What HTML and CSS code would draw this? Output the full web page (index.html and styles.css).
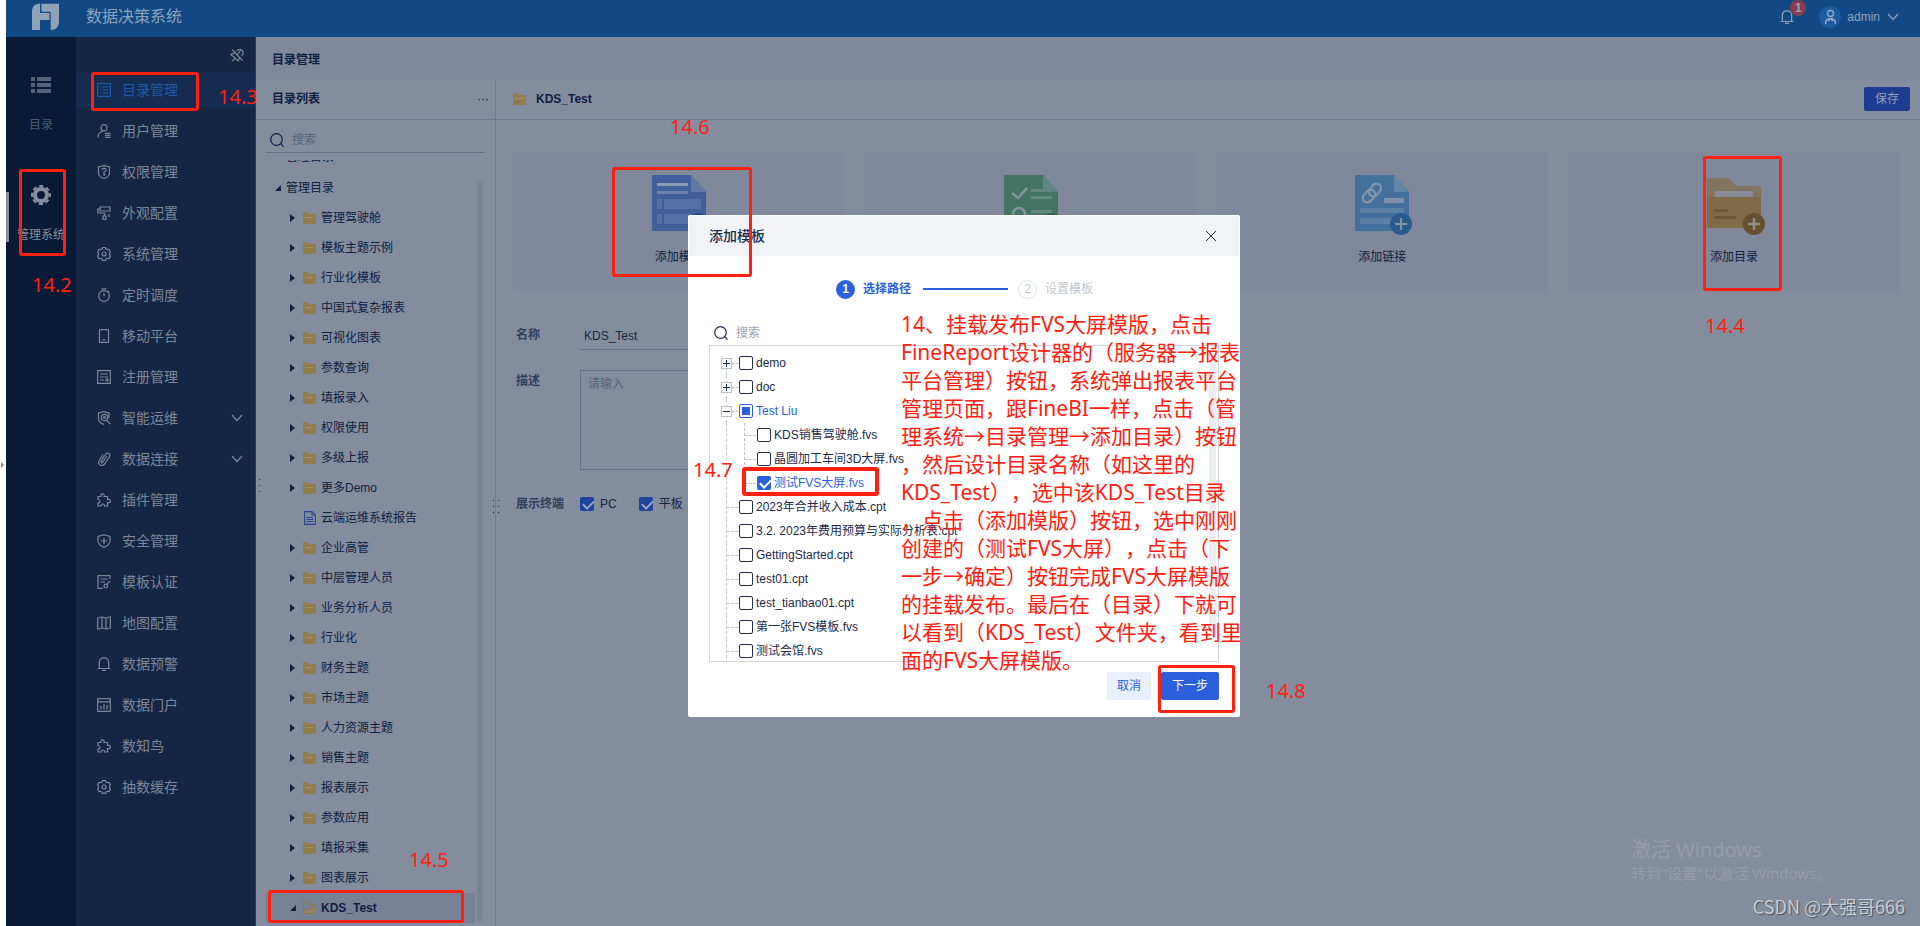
FILE: index.html
```html
<!DOCTYPE html>
<html lang="zh-CN">
<head>
<meta charset="utf-8">
<title>数据决策系统</title>
<link rel="stylesheet" href="styles.css">
</head>
<body>
<svg class="defs" aria-hidden="true">
  <symbol id="folder" viewBox="0 0 13 12"><path d="M0 0H5L6 2H13V12H0Z" fill="#937c4e"/><path d="M2 5.500H11" stroke="#a59169" stroke-width="1"/><path d="M2 9.500H6" stroke="#86703f" stroke-width="1"/></symbol>
  <symbol id="folder-open" viewBox="0 0 13 12"><path d="M.5 11V.5H4.500L6 2.500H11.500V6" fill="none" stroke="#8f7845"/><path d="M.5 11.500V7.500H6L7 6.500H12.500V11.500Z" fill="#938463" stroke="#8f7845"/></symbol>
  <symbol id="report" viewBox="0 0 12 14"><path d="M.6 .6H8L11.400 4V13.400H.6ZM8 .6V4H11.400M2.500 6.500H9M2.500 8.500H9.500M2.500 10.500H9.500" fill="none" stroke="#2b4594" stroke-width="1.100"/></symbol>
  <symbol id="search" viewBox="0 0 14 14"><circle cx="6.500" cy="6.500" r="5.800"/><path d="M10.700 10.700L13.600 13.600"/></symbol>
  <symbol id="chevron" viewBox="0 0 12 8"><path d="M1 1L6 6.500L11 1"/></symbol>
  <symbol id="gear" viewBox="0 0 14 14"><path d="M5 2L5.500 .7H8.500L9 2L10.300 2.700L12 2.500L13.400 5L12.500 6.200V7.800L13.400 9L12 11.500L10.300 11.300L9 12L8.500 13.300H5.500L5 12L3.700 11.300L2 11.500L.6 9L1.500 7.800V6.200L.6 5L2 2.500L3.700 2.700Z"/><circle cx="7" cy="7" r="2"/></symbol>
  <symbol id="puzzle" viewBox="0 0 14 14"><path d="M1 3.500H4Q3.300 .8 5.500 .8Q7.700 .8 7 3.500H10.500V6.500Q13.400 5.800 13.400 8Q13.400 10.200 10.500 9.500V13H7.500Q7.500 11 5.800 11Q4 11 4 13H1V10Q3 9.800 3 8.200Q3 6.600 1 6.500Z"/></symbol>
  <symbol id="bell" viewBox="0 0 14 14"><path d="M2.300 11.500V6Q2.300 .8 7 .8Q11.700 .8 11.700 6V11.500M.5 11.500H13.500M5 13.400H9"/></symbol>
</svg>

<div class="app">
  <header class="topbar">
    <svg class="logo" viewBox="0 0 28 28"><path d="M0 27V7Q1 1 7 .7H8V10H17.500V17H8V27ZM9.300 .7H27V20Q26 26 20 27H18.700V8.700H9.300Z" fill="#8fa2b8"/></svg>
    <h1>数据决策系统</h1>
    <button class="notice" aria-label="消息"><svg class="line" width="14" height="14"><use href="#bell"/></svg><span class="count">1</span></button>
    <button class="user"><svg class="avatar" viewBox="0 0 22 22"><circle cx="11" cy="11" r="11" fill="#1d5b9f"/><g fill="none" stroke="#91a6bf" stroke-width="1.400"><circle cx="11.500" cy="7.500" r="3"/><path d="M6.500 18Q6.500 12.500 11.500 12.500Q16.500 12.500 16.500 18M9 15L11.500 12.500L14 15"/></g></svg>admin<svg class="line" width="12" height="8"><use href="#chevron"/></svg></button>
  </header>

  <div class="body">
    <nav class="rail">
      <a href="#dir"><svg width="20" height="20" viewBox="0 0 20 20" fill="#566276"><path d="M0 2H4V6H0ZM6 2H20V6H6ZM0 8H4V12H0ZM6 8H20V12H6ZM0 14H4V18H0ZM6 14H20V18H6Z"/></svg>目录</a>
      <a href="#sys" class="on"><svg width="20" height="20" viewBox="0 0 20 20"><g fill="none" stroke="#868f9e"><circle cx="10" cy="10" r="6" stroke-width="4"/><circle cx="10" cy="10" r="9" stroke-width="2" stroke-dasharray="4.200 2.868" stroke-dashoffset="2.100"/></g></svg>管理系统</a>
    </nav>

    <nav class="menu">
      <button class="pin" aria-label="固定"><svg class="line" width="14" height="14" viewBox="0 0 14 14"><path d="M6.500 3L8.500 1.500H11L13 3.500V6L11.500 8M9.500 9.500L8 13L5.500 10.500L2 13M5.500 10.500L1 6.500L4.500 5M2 1.500L12.500 12.500M11 1.500L7.500 6.500"/></svg></button>
      <ul>
        <li><a href="#1" class="on"><svg class="line" viewBox="0 0 14 14"><path d="M.7 .7H13.300V13.300H.7ZM3 4H4M5.500 4H11.500M3 7H4M5.500 7H11.500M3 10H4M5.500 10H11.500"/></svg>目录管理</a></li>
        <li><a href="#2"><svg class="line" viewBox="0 0 14 14"><circle cx="7" cy="3.800" r="3.100"/><path d="M1 13.500Q1 8 6 7.500M8 9.300H13.500M8 11.300H13.500M8 13.300H13.500"/></svg>用户管理</a></li>
        <li><a href="#3"><svg class="line" viewBox="0 0 14 14"><path d="M7 .6L12.500 2V8.500Q12 12 7 13.500Q2 12 1.500 8.500V2Z"/><path d="M5 5Q5 3.300 7 3.300Q9 3.300 9 5Q9 6.500 7 7V11M7 9.500H8.500"/></svg>权限管理</a></li>
        <li><a href="#4"><svg class="line" viewBox="0 0 14 14"><path d="M3 1H13V5H3ZM3 3H.8V7H7.500V10M6 10H9V13.500H6ZM12 8V11"/></svg>外观配置</a></li>
        <li><a href="#5"><svg class="line" viewBox="0 0 14 14"><use href="#gear"/></svg>系统管理</a></li>
        <li><a href="#6"><svg class="line" viewBox="0 0 14 14"><circle cx="7" cy="8" r="5.400"/><path d="M4.500 .8H9.500M7 5V8.500M11 3L12.300 4.300"/></svg>定时调度</a></li>
        <li><a href="#7"><svg class="line" viewBox="0 0 14 14"><path d="M2.500 .7H11.500V13.300H2.500ZM5.500 10.800H8.500"/></svg>移动平台</a></li>
        <li><a href="#8"><svg class="line" viewBox="0 0 14 14"><path d="M.7 .7H13.300V13.300H.7ZM3 4H11M3 7H11M3 10H7M8 10H12M10 8V12"/></svg>注册管理</a></li>
        <li><a href="#9"><svg class="line" viewBox="0 0 14 14"><path d="M12 7V2L7 .7L1.500 2V8Q2 12 7 13.400"/><circle cx="7.500" cy="6.500" r="3.200"/><circle cx="7.500" cy="6.500" r="1"/><path d="M9.500 9L13.300 13.200"/></svg>智能运维<svg class="line arrow"><use href="#chevron"/></svg></a></li>
        <li><a href="#10"><svg class="line" viewBox="0 0 14 14"><path d="M10 4L5.500 10.500Q4 11.500 4 9.500L8 3Q10 0 12 1.500Q13.500 3 12 5.500L8 11.500Q5.500 14.500 3 13Q.5 11 2.500 8L6 2.500"/></svg>数据连接<svg class="line arrow"><use href="#chevron"/></svg></a></li>
        <li><a href="#11"><svg class="line" viewBox="0 0 14 14"><use href="#puzzle"/></svg>插件管理</a></li>
        <li><a href="#12"><svg class="line" viewBox="0 0 14 14"><path d="M7 .7L13 2.500V7Q12.500 11.500 7 13.400Q1.500 11.500 1 7V2.500ZM7 4V10M4 7H10"/></svg>安全管理</a></li>
        <li><a href="#13"><svg class="line" viewBox="0 0 14 14"><path d="M13 4V.7H1V13.300H6M3.500 4H10.500M3.500 7H8M13 6L9.500 9.500"/><circle cx="8.800" cy="11" r="1.800"/></svg>模板认证</a></li>
        <li><a href="#14"><svg class="line" viewBox="0 0 14 14"><path d="M.7 2L5 1L9 2L13.300 1V12L9 13L5 12L.7 13ZM5 1V12M9 2V13"/></svg>地图配置</a></li>
        <li><a href="#15"><svg class="line" viewBox="0 0 14 14"><use href="#bell"/></svg>数据预警</a></li>
        <li><a href="#16"><svg class="line" viewBox="0 0 14 14"><path d="M.7 .7H13.300V13.300H.7ZM.7 3.800H13.300M4 8V11.500M7 6V11.500M10 7V11.500"/></svg>数据门户</a></li>
        <li><a href="#17"><svg class="line" viewBox="0 0 14 14"><use href="#puzzle"/></svg>数知鸟</a></li>
        <li><a href="#18"><svg class="line" viewBox="0 0 14 14"><use href="#gear"/></svg>抽数缓存</a></li>
      </ul>
    </nav>

    <main class="work">
      <h2 class="crumb">目录管理</h2>
      <div class="split">
        <section class="catalog">
          <header class="bar"><h3>目录列表</h3><button class="more" aria-label="更多">···</button></header>
          <label class="find"><svg class="line" width="14" height="14"><use href="#search"/></svg><input type="search" placeholder="搜索" aria-label="搜索目录"></label>
          <div class="scroll">
            <ul class="tree">
              <li class="root cut"><i class="tri open"></i>管理目录</li>
              <li class="root"><i class="tri open"></i>管理目录</li>
              <li><i class="tri"></i><svg><use href="#folder"/></svg>管理驾驶舱</li>
              <li><i class="tri"></i><svg><use href="#folder"/></svg>模板主题示例</li>
              <li><i class="tri"></i><svg><use href="#folder"/></svg>行业化模板</li>
              <li><i class="tri"></i><svg><use href="#folder"/></svg>中国式复杂报表</li>
              <li><i class="tri"></i><svg><use href="#folder"/></svg>可视化图表</li>
              <li><i class="tri"></i><svg><use href="#folder"/></svg>参数查询</li>
              <li><i class="tri"></i><svg><use href="#folder"/></svg>填报录入</li>
              <li><i class="tri"></i><svg><use href="#folder"/></svg>权限使用</li>
              <li><i class="tri"></i><svg><use href="#folder"/></svg>多级上报</li>
              <li><i class="tri"></i><svg><use href="#folder"/></svg>更多Demo</li>
              <li><i class="tri none"></i><svg class="doc"><use href="#report"/></svg>云端运维系统报告</li>
              <li><i class="tri"></i><svg><use href="#folder"/></svg>企业高管</li>
              <li><i class="tri"></i><svg><use href="#folder"/></svg>中层管理人员</li>
              <li><i class="tri"></i><svg><use href="#folder"/></svg>业务分析人员</li>
              <li><i class="tri"></i><svg><use href="#folder"/></svg>行业化</li>
              <li><i class="tri"></i><svg><use href="#folder"/></svg>财务主题</li>
              <li><i class="tri"></i><svg><use href="#folder"/></svg>市场主题</li>
              <li><i class="tri"></i><svg><use href="#folder"/></svg>人力资源主题</li>
              <li><i class="tri"></i><svg><use href="#folder"/></svg>销售主题</li>
              <li><i class="tri"></i><svg><use href="#folder"/></svg>报表展示</li>
              <li><i class="tri"></i><svg><use href="#folder"/></svg>参数应用</li>
              <li><i class="tri"></i><svg><use href="#folder"/></svg>填报采集</li>
              <li><i class="tri"></i><svg><use href="#folder"/></svg>图表展示</li>
              <li class="sel"><i class="tri open"></i><svg><use href="#folder-open"/></svg>KDS_Test</li>
            </ul>
            <div class="thumb"></div>
          </div>
        </section>

        <section class="detail">
          <header class="bar"><svg width="13" height="12"><use href="#folder"/></svg><h3>KDS_Test</h3><button class="save">保存</button></header>
          <div class="cards">
            <button class="card"><svg viewBox="0 0 54 60"><path d="M1 0H39L54 17V56H1Q0 56 0 55V1Q0 0 1 0Z" fill="#405f9b"/><path d="M39 0L54 17H40Q39 17 39 16Z" fill="#6078a4"/><path d="M5 8H36V11H5Z" fill="#8b99b5"/><path d="M5 16H36V19H5Z" fill="#6c82ac"/><path d="M5 24H10V34H5ZM12 24H49V34H12ZM5 39H10V49H5ZM12 39H49V49H12Z" fill="#5570a4"/><circle cx="47" cy="49" r="11" fill="#23468c"/></svg>添加模板</button>
            <button class="card"><svg viewBox="0 0 54 60"><path d="M1 0H39L54 17V56H1Q0 56 0 55V1Q0 0 1 0Z" fill="#447564"/><path d="M27 14H40V17H27ZM27 21H48V24H27ZM27 35H48V38H27Z" fill="#64897f"/><path d="M39 0L54 17H40Q39 17 39 16Z" fill="#5e8880"/><path d="M8 18L14 23L23 13" fill="none" stroke="#8296a0" stroke-width="2.500"/><circle cx="15" cy="39" r="6" fill="none" stroke="#8296a0" stroke-width="2.500"/><circle cx="47" cy="49" r="11" fill="#2b6450"/></svg>添加上报流程</button>
            <button class="card"><svg viewBox="0 0 54 60"><path d="M1 0H39L54 17V56H1Q0 56 0 55V1Q0 0 1 0Z" fill="#44709c"/><path d="M39 0L54 17H40Q39 17 39 16Z" fill="#6286a8"/><g fill="none" stroke="#8395aa" stroke-width="2.200"><rect x="-7" y="-4.500" width="14" height="9" rx="4.500" transform="translate(14 21) rotate(-50)"/><rect x="-7" y="-4.500" width="14" height="9" rx="4.500" transform="translate(20 15) rotate(-50)"/></g><path d="M29 23H49V28H29Z" fill="#7d91ab"/><path d="M5 33H49V38H5ZM5 43H40V49H5Z" fill="#5b80a5"/><circle cx="46" cy="49" r="11" fill="#2b5b8e"/><path d="M46 43V55M40 49H52" stroke="#8395aa" stroke-width="2"/></svg>添加链接</button>
            <button class="card"><svg viewBox="0 0 54 60"><path d="M2 3H20Q22 3 24 5L30 11H52Q54 11 54 13V24H0V5Q0 3 2 3Z" fill="#81755f"/><path d="M8 22V18Q8 16 10 16H44Q46 16 46 18V22Z" fill="#868c98"/><path d="M0 22H54V51Q54 53 52 53H2Q0 53 0 51Z" fill="#7f6b47"/><path d="M7 34H21V37H7ZM7 41H29V44H7Z" fill="#705737"/><circle cx="47" cy="49" r="11" fill="#674e2f"/><path d="M47 43V55M41 49H53" stroke="#8f8c8a" stroke-width="2.400"/></svg>添加目录</button>
          </div>
          <form class="fields">
            <label for="name">名称</label><input id="name" class="text" value="KDS_Test">
            <label for="desc">描述</label><textarea id="desc" placeholder="请输入"></textarea>
            <span>展示终端</span>
            <div class="terms"><label><input type="checkbox" class="tick" checked>PC</label><label><input type="checkbox" class="tick" checked>平板</label></div>
          </form>
        </section>
      </div>
    </main>
  </div>
</div>

<div class="grip g0"></div>
<div class="grip g1"></div>
<div class="grip g2"></div>

<div class="layer">
  <section class="dialog" role="dialog" aria-label="添加模板">
    <header><h2>添加模板</h2><button class="close" aria-label="关闭"><svg class="line" width="12" height="12" viewBox="0 0 12 12"><path d="M1 1L11 11M11 1L1 11"/></svg></button></header>
    <div class="steps"><b class="num">1</b><b>选择路径</b><i></i><span class="num">2</span><span>设置模板</span></div>
    <label class="seek"><svg class="line" width="14" height="14"><use href="#search"/></svg><input type="search" placeholder="搜索" aria-label="搜索模板"></label>
    <div class="pick">
      <ul>
        <li class="first"><button class="exp" aria-label="展开"></button><label><input type="checkbox">demo</label></li>
        <li><button class="exp" aria-label="展开"></button><label><input type="checkbox">doc</label></li>
        <li class="act"><button class="exp minus" aria-label="收起"></button><label><input type="checkbox" class="half">Test Liu</label></li>
        <li class="sub"><label><input type="checkbox">KDS销售驾驶舱.fvs</label></li>
        <li class="sub"><label><input type="checkbox">晶圆加工车间3D大屏.fvs</label></li>
        <li class="sub end act"><label><input type="checkbox" class="tick" checked>测试FVS大屏.fvs</label></li>
        <li class="leaf"><label><input type="checkbox">2023年合并收入成本.cpt</label></li>
        <li class="leaf"><label><input type="checkbox">3.2. 2023年费用预算与实际分析表.cpt</label></li>
        <li class="leaf"><label><input type="checkbox">GettingStarted.cpt</label></li>
        <li class="leaf"><label><input type="checkbox">test01.cpt</label></li>
        <li class="leaf"><label><input type="checkbox">test_tianbao01.cpt</label></li>
        <li class="leaf"><label><input type="checkbox">第一张FVS模板.fvs</label></li>
        <li class="leaf"><label><input type="checkbox">测试会馆.fvs</label></li>
      </ul>
      <div class="thumb"></div>
    </div>
    <footer><button>取消</button><button class="primary">下一步</button></footer>
  </section>
</div>

<div class="notes">
  <div class="box b2"></div><span class="n2">14.2</span>
  <div class="box b3"></div><span class="n3">14.3</span>
  <div class="box b4"></div><span class="n4">14.4</span>
  <div class="box b5"></div><span class="n5">14.5</span>
  <div class="box b6"></div><span class="n6">14.6</span>
  <div class="box b7"></div><span class="n7">14.7</span>
  <div class="box b8"></div><span class="n8">14.8</span>
  <p>14、挂载发布FVS大屏模版，点击<br>FineReport设计器的（服务器→报表<br>平台管理）按钮，系统弹出报表平台<br>管理页面，跟FineBI一样，点击（管<br>理系统→目录管理→添加目录）按钮<br>，然后设计目录名称（如这里的<br>KDS_Test），选中该KDS_Test目录<br>，点击（添加模版）按钮，选中刚刚<br>创建的（测试FVS大屏），点击（下<br>一步→确定）按钮完成FVS大屏模版<br>的挂载发布。最后在（目录）下就可<br>以看到（KDS_Test）文件夹，看到里<br>面的FVS大屏模版。</p>
</div>
<div class="activate"><div>激活 Windows</div><small>转到"设置"以激活 Windows。</small></div>
<div class="credit">CSDN @大强哥666</div>
</body>
</html>
```

FILE: styles.css
```css
* { box-sizing: border-box; }
body {
  margin: 0;
  position: relative;
  background: #fff;
  color: #0e2040;
  font: 12px/16px "Liberation Sans", "Noto Sans CJK SC", sans-serif;
  overflow: hidden;
}
h1, h2, h3, ul, p { margin: 0; padding: 0; font-size: inherit; }
ul { list-style: none; }
a { color: inherit; text-decoration: none; }
button, input, textarea { font: inherit; color: inherit; margin: 0; padding: 0; border: 0; background: none; outline: 0; }
input[type=search] { appearance: none; flex: 1; min-width: 0; }
::placeholder { color: #566379; opacity: 1; }
.defs { position: absolute; width: 0; height: 0; }
.line { fill: none; stroke: currentColor; stroke-width: 1.2; flex: none; }

.app { min-height: 100vh; margin-left: 6px; display: flex; flex-direction: column; }

.topbar { height: 37px; padding: 0 21px 0 26px; display: flex; align-items: center; background: #124883; color: #8da3bc; }
.logo { width: 28px; height: 28px; margin: 0 26px 3px 0; }
.topbar h1 { flex: 1; font-size: 16px; font-weight: 400; line-height: 20px; padding-bottom: 4px; }
.topbar button { display: flex; align-items: center; margin-bottom: 3px; }
.notice { position: relative; margin-right: 25px; }
.count { position: absolute; left: 10px; top: -10px; width: 16px; height: 16px; border-radius: 8px; background: #883c50; color: #a9a0ae; font-weight: 700; text-align: center; }
.user { gap: 6px; }
.user .line { margin-left: 1px; }
.avatar { width: 22px; height: 22px; }

.body { flex: 1; display: flex; }
.rail { width: 70px; background: #091a36; color: #4d5a70; padding-top: 38px; display: flex; flex-direction: column; gap: 34px; }
.rail a { height: 76px; display: flex; flex-direction: column; align-items: center; gap: 22px; white-space: nowrap; }
.rail a.on { color: #868f9e; position: relative; }
.rail a.on::before { content: ""; position: absolute; left: 0; top: 7px; width: 3px; height: 50px; background: #868f9e; }

.menu { width: 180px; background: #152645; border-right: 1px solid #2c3b57; color: #7d8797; font-size: 14px; }
.pin { display: flex; height: 35px; margin-left: auto; padding: 11px 11px 0 0; }
.menu ul { display: flex; flex-direction: column; gap: 5px; }
.menu a { height: 36px; display: flex; align-items: center; gap: 11px; padding: 0 12px 0 21px; }
.menu a > svg:first-child { width: 14px; height: 14px; }
.menu a.on { background: #152b50; color: #1f5aa8; }
.menu .arrow { width: 12px; height: 8px; margin-left: auto; }

.work { flex: 1; min-width: 0; display: flex; flex-direction: column; background: #848d9e; }
.crumb { height: 42px; padding: 15px 16px 0; background: #7f899b; }
.split { flex: 1; display: flex; }
.bar { height: 41px; display: flex; align-items: center; padding: 0 10px 0 16px; border-bottom: 1px solid #6f7a8c; }
.bar h3 { flex: 1; }
.catalog { width: 240px; border-right: 1px solid #6f7a8c; display: flex; flex-direction: column; }
.bar .more { margin-right: -4px; }
.find { height: 33px; margin: 0 10px; padding: 7px 4px 0; display: flex; align-items: center; gap: 8px; border-bottom: 1px solid #647084; }
.scroll { flex: 1; display: flex; margin: 7px 12px 0 10px; overflow: hidden; }
.tree { flex: 1; }
.tree li { height: 30px; padding-left: 24px; display: flex; align-items: center; }
.tree svg { width: 13px; height: 12px; margin: 0 5px 0 8px; }
.tree svg.doc { width: 12px; height: 14px; margin-left: 9px; }
.tree .root { padding-left: 9px; gap: 5px; }
.tree .cut { margin: -18px 0 1px; }
.tree .sel { background: #778295; font-weight: 700; margin-right: 2px; }
.tri { width: 5px; height: 8px; background: #0e2040; clip-path: polygon(0 0, 100% 50%, 0 100%); }
.tri.open { width: 6px; height: 6px; clip-path: polygon(100% 0, 100% 100%, 0 100%); }
.sel .tri.open { margin-right: -1px; }
.tri.none { visibility: hidden; }
.scroll .thumb { width: 6px; border-radius: 3px; margin: 21px 0 5px; background: #798495; }

.detail { flex: 1; min-width: 0; }
.detail .bar { gap: 10px; padding-left: 17px; }
.save { width: 46px; height: 24px; border-radius: 2px; background: #1c3c90; color: #929fbd; }
.cards { display: grid; grid-template-columns: repeat(4, 1fr); gap: 20px; padding: 32px 20px 0 17px; }
.card { display: flex; flex-direction: column; align-items: center; gap: 14px; padding: 23px 0 25px; background: #7f899b; }
.card svg { width: 54px; height: 60px; overflow: visible; }
.fields { display: grid; grid-template-columns: 64px 220px; padding: 31px 20px; row-gap: 20px; color: #2f3f5a; font-weight: 700; }
.fields > label, .fields > span { padding-top: 6px; }
.fields > textarea, .text { font-weight: 400; color: #152642; border: 0 solid #647084; }
.fields label[for=desc] { padding-top: 3px; }
.text { height: 29px; padding: 2px 4px 0; border-bottom-width: 1px; }
.fields textarea { height: 100px; padding: 5px 7px; border-width: 1px; resize: none; }
.terms { display: flex; gap: 22px; padding-top: 6px; font-weight: 400; color: #152642; }
.terms label { display: flex; align-items: center; gap: 6px; }

input[type=checkbox] { appearance: none; width: 14px; height: 14px; flex: none; border: 1px solid #23314d; border-radius: 2px; }
input.tick[type=checkbox] { border: 0; background: #2b5fdc; }
.terms input.tick[type=checkbox] { background: #1d449e; }
.tick::before { content: ""; display: block; width: 9px; height: 5px; margin: 3px 0 0 3px; border: solid #fff; border-width: 0 0 2px 2px; transform: rotate(-45deg); }
.terms .tick::before { border-color: #9aa6bd; }
input.half[type=checkbox] { border-color: #2b5fdc; padding: 2px; background: #2b5fdc content-box; }

.grip { position: absolute; width: 6px; height: 13px; background: linear-gradient(#1a2640, #1a2640) 0 0 / 1px 13px no-repeat, linear-gradient(#1a2640, #1a2640) 5px 0 / 1px 13px no-repeat; mask: repeating-linear-gradient(#000 0 1px, transparent 1px 6px); }
.g0 { left: 1px; top: 462px; width: 3px; height: 6px; background: #8a8a8a; mask: none; clip-path: polygon(0 0, 100% 50%, 0 100%); }
.g1 { left: 254px; top: 479px; }
.g2 { left: 493px; top: 500px; }

.layer { position: absolute; inset: 6px 0 0 8px; display: flex; align-items: center; justify-content: center; }
.dialog { width: 552px; background: #fff; border-radius: 2px; color: #1c2b4a; }
.dialog > header { height: 41px; margin: 0 1px; padding: 0 22px 0 20px; display: flex; align-items: center; background: #f2f3f7; border-top: 1px solid #fff; }
.dialog h2 { flex: 1; font-size: 14px; font-weight: 500; }
.close { display: flex; }
.close .line { stroke-width: 1; }
.steps { height: 20px; margin: 23px 147px 22px 148px; display: flex; align-items: center; color: #c3c6cd; }
.steps b { color: #2b5fdc; }
.steps .num { width: 19px; height: 19px; line-height: 17px; margin-right: 8px; border: 1px solid #e4e5e8; border-radius: 50%; text-align: center; }
.steps b.num { background: #2b5fdc; border-color: #2b5fdc; color: #fff; }
.steps i { flex: 1; height: 2px; margin: 0 10px 0 12px; background: #2b5fdc; }
.seek { height: 24px; margin: 0 21px; padding-left: 5px; display: flex; align-items: center; gap: 8px; }
.seek ::placeholder { color: #9aa1ad; }
.pick { height: 317px; margin: 0 21px; padding: 5px 2px 0 0; border: 1px solid #d4d6db; display: flex; overflow: hidden; }
.pick ul { flex: 1; }
.pick .thumb { width: 7px; height: 280px; margin-top: 6px; background: #ecedf0; border-radius: 3px; }
.pick li { position: relative; height: 24px; padding-left: 11px; display: flex; align-items: center; gap: 7px; }
.pick li::before { content: ""; position: absolute; left: 16px; top: 0; height: 24px; border-left: 1px dashed #c3c6cd; }
.pick li::after { content: ""; position: absolute; left: 17px; top: 12px; width: 11px; border-top: 1px dashed #c3c6cd; }
.pick .first::before { top: 12px; height: 12px; }
.pick .leaf { padding-left: 29px; }
.pick .sub { padding-left: 47px; background: repeating-linear-gradient(#c3c6cd 0 3px, transparent 3px 5px) 34px 0 / 1px 24px no-repeat; }
.pick .sub.end { background-size: 1px 12px; }
.pick .sub::after { left: 35px; }
.pick label { display: flex; align-items: center; gap: 3px; white-space: nowrap; }
.act label { color: #2b5fdc; }
.exp { z-index: 1; width: 11px; height: 11px; border: 1px solid #b9bdc6; background: linear-gradient(#1c2b4a, #1c2b4a) 50% / 7px 1px no-repeat, linear-gradient(#1c2b4a, #1c2b4a) 50% / 1px 7px no-repeat, #fff; }
.exp.minus { background: linear-gradient(#1c2b4a, #1c2b4a) 50% / 7px 1px no-repeat, #fff; }
.dialog footer { display: flex; justify-content: flex-end; gap: 10px; padding: 10px 21px 17px; }
.dialog footer button { height: 28px; padding: 0 10px; border-radius: 2px; background: #e9effc; color: #2b5fdc; }
.dialog footer .primary { padding: 0 11px; background: #2b5fdc; color: #fff; }

.notes { position: absolute; left: 0; top: 0; color: #ff2010; font: 21px/28px "Noto Sans", "Noto Sans CJK SC", sans-serif; text-spacing-trim: space-all; pointer-events: none; }
.notes > * { position: absolute; white-space: nowrap; }
.notes p { left: 901px; top: 310px; }
.notes span { font-size: 20px; }
.box { border: 3px solid #ff2010; border-radius: 3px; }
.b2 { left: 19px; top: 169px; width: 47px; height: 87px; }
.b3 { left: 91px; top: 72px; width: 108px; height: 39px; }
.b4 { left: 1703px; top: 156px; width: 79px; height: 135px; }
.b5 { left: 268px; top: 890px; width: 196px; height: 33px; }
.b6 { left: 612px; top: 167px; width: 140px; height: 110px; }
.b7 { left: 742px; top: 467px; width: 137px; height: 29px; border-width: 4px; }
.b8 { left: 1158px; top: 665px; width: 77px; height: 48px; }
.n2 { left: 32px; top: 271px; }
.n3 { left: 218px; top: 83px; }
.n4 { left: 1705px; top: 312px; }
.n5 { left: 409px; top: 846px; }
.n6 { left: 670px; top: 113px; }
.n7 { left: 693px; top: 456px; }
.n8 { left: 1266px; top: 677px; }

.activate { position: absolute; right: 92px; bottom: 43px; width: 197px; color: #999da5; font: 20px/26px "Noto Sans", "Noto Sans CJK SC", sans-serif; white-space: nowrap; }
.activate small { display: block; font-size: 15px; line-height: 20px; }
.credit { position: absolute; right: 15px; bottom: 8px; color: #c8ccd3; font: 18px/24px "Noto Sans CJK SC", sans-serif; text-shadow: 1px 1px 1px #4a4f58; }
```
